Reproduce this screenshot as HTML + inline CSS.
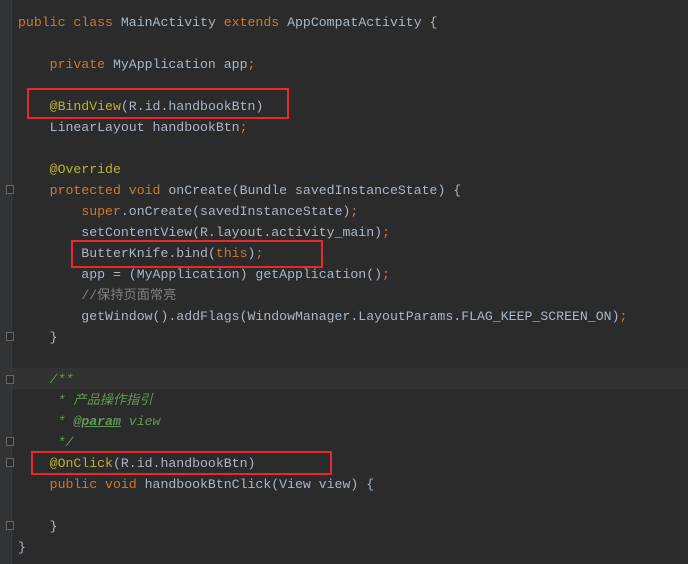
<!DOCTYPE html>
<html><head><style>
body{margin:0;width:688px;height:564px;background:#2b2b2b;overflow:hidden;position:relative;font-family:"Liberation Mono","Noto Sans CJK SC",monospace;font-size:13.2px;color:#a9b7c6}
.g{position:absolute;left:0;top:0;width:11px;height:564px;background:#313335;border-right:1px solid #3a3a3a}
.hl{position:absolute;left:12px;top:368px;width:676px;height:21px;background:#323232}
.l{position:absolute;left:18px;white-space:pre;line-height:21px;height:21px}
.k{color:#cc7832}.a{color:#bbb529}.c{color:#808080}.d{color:#629755;font-style:italic}.t{color:#629755;font-weight:bold;text-decoration:underline;font-style:italic}
.b{position:absolute;border:2px solid #e8282d}
.f{position:absolute;left:6px;width:8px;height:9px;border:1px solid #666;box-sizing:border-box;background:#2b2b2b}
</style></head><body>
<div class="g"></div><div class="hl"></div>
<div class="f" style="top:185px"></div><div class="f" style="top:332px"></div><div class="f" style="top:375px"></div><div class="f" style="top:437px"></div><div class="f" style="top:458px"></div><div class="f" style="top:521px"></div>
<div class="l" style="top:12px"><span class="k">public class </span>MainActivity <span class="k">extends </span>AppCompatActivity {</div>
<div class="l" style="top:54px">    <span class="k">private </span>MyApplication app<span class="k">;</span></div>
<div class="l" style="top:96px">    <span class="a">@BindView</span>(R.id.<span>handbookBtn</span>)</div>
<div class="l" style="top:117px">    LinearLayout handbookBtn<span class="k">;</span></div>
<div class="l" style="top:159px">    <span class="a">@Override</span></div>
<div class="l" style="top:180px">    <span class="k">protected void </span>onCreate(Bundle savedInstanceState) {</div>
<div class="l" style="top:201px">        <span class="k">super</span>.onCreate(savedInstanceState)<span class="k">;</span></div>
<div class="l" style="top:222px">        setContentView(R.layout.<span>activity_main</span>)<span class="k">;</span></div>
<div class="l" style="top:243px">        ButterKnife.<span>bind</span>(<span class="k">this</span>)<span class="k">;</span></div>
<div class="l" style="top:264px">        app = (MyApplication) getApplication()<span class="k">;</span></div>
<div class="l" style="top:285px">        <span class="c">//保持页面常亮</span></div>
<div class="l" style="top:306px">        getWindow().addFlags(WindowManager.LayoutParams.<span>FLAG_KEEP_SCREEN_ON</span>)<span class="k">;</span></div>
<div class="l" style="top:327px">    }</div>
<div class="l" style="top:369px">    <span class="d">/**</span></div>
<div class="l" style="top:390px"><span class="d">     * 产品操作指引</span></div>
<div class="l" style="top:411px"><span class="d">     * </span><span class="t">@param</span><span class="d"> view</span></div>
<div class="l" style="top:432px"><span class="d">     */</span></div>
<div class="l" style="top:453px">    <span class="a">@OnClick</span>(R.id.<span>handbookBtn</span>)</div>
<div class="l" style="top:474px">    <span class="k">public void </span>handbookBtnClick(View view) {</div>
<div class="l" style="top:516px">    }</div>
<div class="l" style="top:537px">}</div>
<div class="b" style="left:27px;top:88px;width:258px;height:27px"></div>
<div class="b" style="left:71px;top:240px;width:248px;height:24px"></div>
<div class="b" style="left:31px;top:451px;width:297px;height:20px"></div>
</body></html>
